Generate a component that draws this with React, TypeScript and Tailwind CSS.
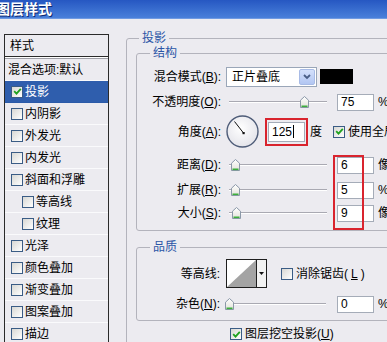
import React from "react";

type Effect = { name: string; on?: boolean; active?: boolean; sub?: boolean };

const effects: Effect[] = [
  { name: "投影", on: true, active: true },
  { name: "内阴影" },
  { name: "外发光" },
  { name: "内发光" },
  { name: "斜面和浮雕" },
  { name: "等高线", sub: true },
  { name: "纹理", sub: true },
  { name: "光泽" },
  { name: "颜色叠加" },
  { name: "渐变叠加" },
  { name: "图案叠加" },
  { name: "描边" },
];

function CheckBox({ on }: { on?: boolean }) {
  return (
    <span className="inline-flex h-[12px] w-[12px] shrink-0 items-center justify-center border border-[#3A5C85] bg-linear-to-br from-[#D8D8D4] to-white">
      {on && (
        <svg width="9" height="9" viewBox="0 0 9 9">
          <path d="M1.2 4.2 L3.5 6.6 L7.8 1.8" stroke="#1FA21F" strokeWidth="1.8" fill="none" />
        </svg>
      )}
    </span>
  );
}

function Slider({ pos }: { pos: number }) {
  return (
    <div className="relative h-[18px] w-[104px] shrink-0">
      <div className="absolute left-[3px] right-[3px] top-[8px] h-[2px] border-t border-[#A9A9B2] bg-white" />
      <svg width="9" height="12" viewBox="0 0 9 12" className="absolute top-[3px]" style={{ left: pos }}>
        <defs>
          <linearGradient id="thumb" x1="0" y1="0" x2="0" y2="1">
            <stop offset="0" stopColor="#FFFFFF" />
            <stop offset="1" stopColor="#E2E2DA" />
          </linearGradient>
        </defs>
        <path d="M4.5 0.5 L8.5 4.2 V11.5 H0.5 V4.2 Z" fill="url(#thumb)" stroke="#8B98A8" />
        <path d="M1.5 10.3 H7.5" stroke="#3DAE3D" strokeWidth="1.6" />
      </svg>
    </div>
  );
}

function NumBox({ value }: { value: string }) {
  return (
    <div className="flex h-[17px] w-[37px] shrink-0 items-center border border-[#A5ACB8] bg-white pl-[3px] text-[12px] leading-none">
      {value}
    </div>
  );
}

function Label({ children, w = "w-[84px]" }: { children: React.ReactNode; w?: string }) {
  return <span className={`${w} shrink-0 text-right`}>{children}</span>;
}

function Dial() {
  return (
    <svg width="33" height="33" viewBox="0 0 33 33" className="shrink-0">
      <defs>
        <radialGradient id="dial" cx="0.45" cy="0.4" r="0.6">
          <stop offset="0" stopColor="#FFFFFF" />
          <stop offset="1" stopColor="#E4E4EA" />
        </radialGradient>
      </defs>
      <circle cx="16.5" cy="16.5" r="15.5" fill="url(#dial)" stroke="#4E5C78" strokeWidth="1.4" />
      <line x1="17.5" y1="18" x2="8.5" y2="6.5" stroke="#111" strokeWidth="1" />
      <rect x="16.5" y="17" width="2.2" height="2.2" fill="#111" />
    </svg>
  );
}

function Contour() {
  return (
    <div className="flex h-[29px] w-[41px] shrink-0 border border-[#1E1E1E] bg-white">
      <svg width="29" height="27" viewBox="0 0 29 27">
        <path d="M0 27 L29 0 V27 Z" fill="#A4A4A4" />
      </svg>
      <div className="flex w-[10px] items-center justify-center border-l border-[#1E1E1E] bg-[#F2F2F2]">
        <svg width="5" height="3" viewBox="0 0 5 3">
          <path d="M0 0 H5 L2.5 3 Z" fill="#111" />
        </svg>
      </div>
    </div>
  );
}

export default function App() {
  return (
    <div className="h-[342px] w-[387px] overflow-hidden bg-[#ECEBF0] font-['Liberation_Sans','Noto_Sans_CJK_SC',sans-serif] text-[12px] leading-[14px] text-black">
      <div className="flex h-[19px] items-center border-b border-[#6F9AE2] bg-linear-to-b from-[#2657C2] to-[#4A80DA]">
        <span className="-ml-[4px] text-[14px] font-bold text-white [text-shadow:1px_1px_0_#0E2A72]">
          图层样式
        </span>
      </div>

      <div className="flex">
        <div className="w-[126px] shrink-0 pl-[4px] pt-[15px]">
          <div className="w-[105px] border-x border-[#2A2A2A]">
            <div className="flex h-[23px] items-center border-t border-b border-[#2A2A2A] pl-[5px]">样式</div>
            <div className="h-[2px] border-t border-white bg-[#A0A0A8]" />
            <div className="flex h-[22px] items-center border-b border-[#FAFAFC] pl-[3px]">混合选项:默认</div>
            {effects.map((e) => (
              <div
                key={e.name}
                className={`flex h-[22px] items-center gap-[2px] border-b ${
                  e.active ? "border-[#2B5AA8] bg-[#2F5EAD] text-white" : "border-[#FAFAFC]"
                } ${e.sub ? "pl-[17px]" : "pl-[6px]"}`}
              >
                <CheckBox on={e.on} />
                <span>{e.name}</span>
              </div>
            ))}
          </div>
        </div>

        <fieldset className="mt-[12px] h-[340px] w-[300px] shrink-0 rounded-[3px] border border-[#B3B3BC]">
          <legend className="ml-[12px] px-[3px] leading-[14px] text-[#2B55A6]">投影</legend>

          <fieldset className="ml-[9px] mt-[1px] w-[285px] rounded-[3px] border border-[#B3B3BC] pb-[8px]">
            <legend className="ml-[13px] px-[3px] leading-[14px] text-[#2B55A6]">结构</legend>

            <div className="mt-[6px] flex h-[21px] items-center">
              <Label>
                混合模式(<u>B</u>):
              </Label>
              <div className="ml-[5px] flex h-[20px] w-[91px] items-center justify-between border border-[#9AA6B8] bg-white pl-[5px] pr-[1px]">
                <span>正片叠底</span>
                <span className="flex h-[16px] w-[16px] items-center justify-center rounded-[2px] border border-[#A8BBE6] bg-linear-to-b from-[#D4E0FB] to-[#B2C6F2]">
                  <svg width="8" height="6" viewBox="0 0 8 6">
                    <path d="M1 1 L4 4 L7 1" stroke="#4A5E86" strokeWidth="1.8" fill="none" />
                  </svg>
                </span>
              </div>
              <div className="ml-[3px] h-[15px] w-[33px] bg-black" />
            </div>

            <div className="mt-[6px] flex h-[18px] items-center">
              <Label>
                不透明度(<u>O</u>):
              </Label>
              <div className="ml-[5px]">
                <Slider pos={74} />
              </div>
              <div className="ml-[7px]">
                <NumBox value="75" />
              </div>
              <span className="ml-[4px]">%</span>
            </div>

            <div className="mt-[4px] flex h-[33px] items-center">
              <Label>
                角度(<u>A</u>):
              </Label>
              <div className="ml-[5px]">
                <Dial />
              </div>
              <div className="ml-[6px] flex h-[28px] w-[43px] items-center justify-center border-2 border-[#D9242E]">
                <div className="flex h-[20px] w-[37px] items-center border border-[#A5ACB8] bg-white pl-[3px] leading-none">
                  125<span className="ml-[1px] h-[13px] w-[1px] bg-black" />
                </div>
              </div>
              <span className="ml-[2px]">度</span>
              <span className="ml-[11px] flex items-center gap-[3px] whitespace-nowrap">
                <CheckBox on />
                使用全局光(<u>G</u>)
              </span>
            </div>

            <div className="relative mt-[8px]">
              <div className="flex h-[18px] items-center">
                <Label>
                  距离(<u>D</u>):
                </Label>
                <div className="ml-[5px]">
                  <Slider pos={5} />
                </div>
                <div className="ml-[7px]">
                  <NumBox value="6" />
                </div>
                <span className="ml-[4px]">像素</span>
              </div>
              <div className="mt-[7px] flex h-[18px] items-center">
                <Label>
                  扩展(<u>R</u>):
                </Label>
                <div className="ml-[5px]">
                  <Slider pos={5} />
                </div>
                <div className="ml-[7px]">
                  <NumBox value="5" />
                </div>
                <span className="ml-[4px]">%</span>
              </div>
              <div className="mt-[5px] flex h-[18px] items-center">
                <Label>
                  大小(<u>S</u>):
                </Label>
                <div className="ml-[5px]">
                  <Slider pos={6} />
                </div>
                <div className="ml-[7px]">
                  <NumBox value="9" />
                </div>
                <span className="ml-[4px]">像素</span>
              </div>
              <div className="absolute left-[196px] top-[-1px] h-[75px] w-[31px] border-2 border-[#D9242E]" />
            </div>
          </fieldset>

          <fieldset className="ml-[9px] mt-[9px] w-[285px] rounded-[3px] border border-[#B3B3BC] pb-[7px]">
            <legend className="ml-[13px] px-[3px] leading-[14px] text-[#2B55A6]">品质</legend>
            <div className="mt-[5px] flex h-[29px] items-center">
              <Label w="w-[83px]">等高线:</Label>
              <div className="ml-[6px]">
                <Contour />
              </div>
              <span className="ml-[14px] flex items-center gap-[3px]">
                <CheckBox />
                消除锯齿(<u>L</u>)
              </span>
            </div>
            <div className="mt-[7px] flex h-[18px] items-center">
              <Label w="w-[83px]">
                杂色(<u>N</u>):
              </Label>
              <div className="ml-[5px]">
                <Slider pos={0} />
              </div>
              <div className="ml-[8px]">
                <NumBox value="0" />
              </div>
              <span className="ml-[4px]">%</span>
            </div>
          </fieldset>

          <div className="ml-[103px] mt-[6px] flex items-center gap-[3px]">
            <CheckBox on />
            <span>
              图层挖空投影(<u>U</u>)
            </span>
          </div>
        </fieldset>
      </div>
    </div>
  );
}
